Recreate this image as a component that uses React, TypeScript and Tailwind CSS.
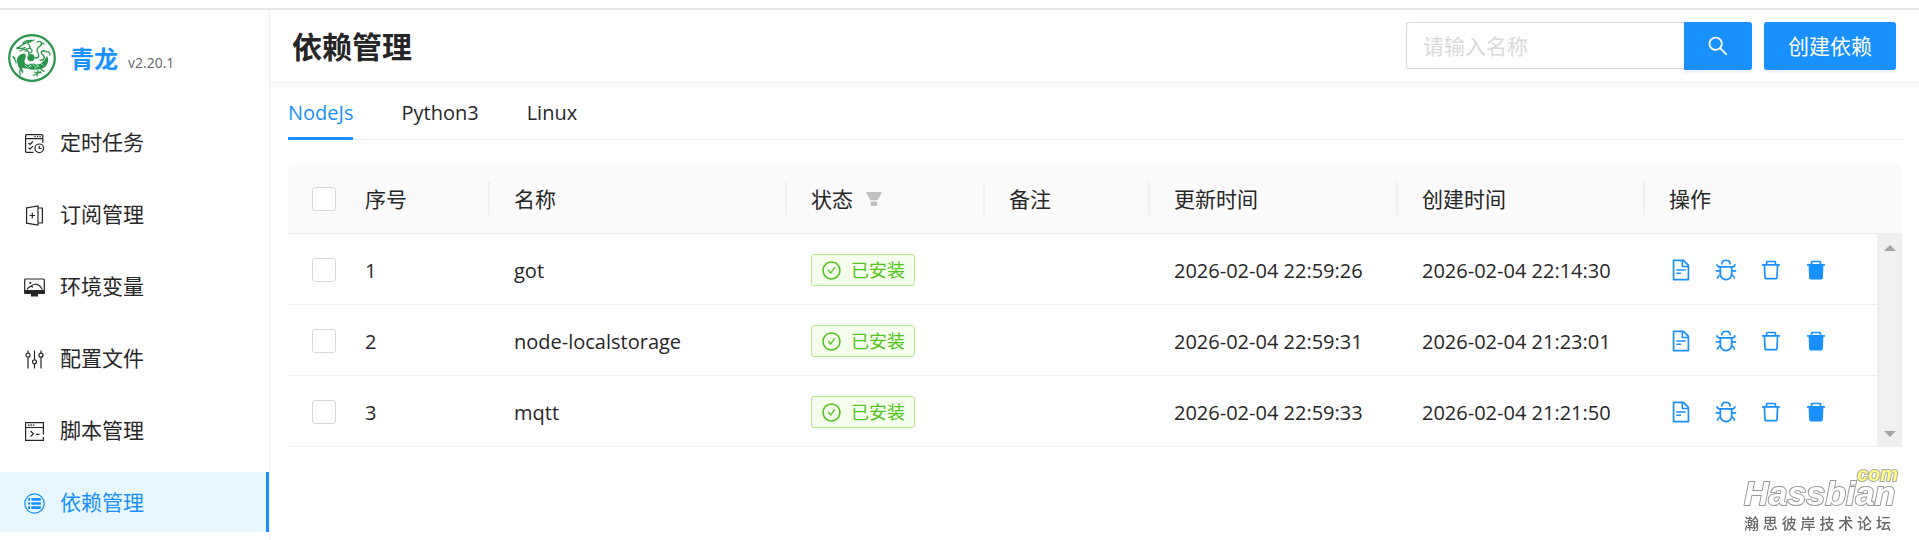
import { useState, type ReactNode } from "react";
import {
  AiFillDelete,
  AiFillFilter,
  AiOutlineBug,
  AiOutlineCheckCircle,
  AiOutlineDelete,
  AiOutlineFileText,
  AiOutlineSearch,
} from "react-icons/ai";

interface Dependence {
  id: number;
  name: string;
  remark: string;
  updatedAt: string;
  createdAt: string;
}

const rows: Dependence[] = [
  { id: 1, name: "got", remark: "", updatedAt: "2026-02-04 22:59:26", createdAt: "2026-02-04 22:14:30" },
  { id: 2, name: "node-localstorage", remark: "", updatedAt: "2026-02-04 22:59:31", createdAt: "2026-02-04 21:23:01" },
  { id: 3, name: "mqtt", remark: "", updatedAt: "2026-02-04 22:59:33", createdAt: "2026-02-04 21:21:50" },
];

const tabs = ["NodeJs", "Python3", "Linux"];

function MenuIcon({ children }: { children: ReactNode }) {
  return (
    <svg
      className="h-[21px] w-[21px] shrink-0"
      viewBox="0 0 21 21"
      fill="none"
      stroke="currentColor"
      strokeWidth="1.2"
      aria-hidden="true"
    >
      {children}
    </svg>
  );
}

const menu: { label: string; icon: ReactNode }[] = [
  {
    label: "定时任务",
    icon: (
      <MenuIcon>
        <path d="M9.5 19.4H2.6a1 1 0 0 1-1-1V2.6a1 1 0 0 1 1-1h15.2a1 1 0 0 1 1 1v7.2M1.6 5.6h17.2M10.5 3.6h1.2M13 3.6h1.2M15.5 3.6h1.2" />
        <path d="M4.4 10l1.6 1.5 3-3M4.4 14.6L6 16.1l3-3" />
        <circle cx="15.3" cy="15.3" r="4.3" />
        <path d="M15.2 12.8v2.7h2.2" />
      </MenuIcon>
    ),
  },
  {
    label: "订阅管理",
    icon: (
      <MenuIcon>
        <path d="M2.6 2.8L14 .9v19.2L2.6 18.2zM14 3h4.4v15H14M8.3 7.8v5.4M5.6 10.5H11" />
      </MenuIcon>
    ),
  },
  {
    label: "环境变量",
    icon: (
      <MenuIcon>
        <rect x=".7" y="2" width="19.6" height="14.4" rx="1" />
        <path d="M1 13.6h19v2.8H1zM7.5 16.4h6v2.6h-6z" fill="currentColor" />
        <path d="M3 12.5c1.6-3 4-4 6-2.2M6.5 9.6c3.5-4 9-2.8 11.7 2.9" />
        <circle cx="6.3" cy="5.8" r="1.1" fill="currentColor" stroke="none" />
      </MenuIcon>
    ),
  },
  {
    label: "配置文件",
    icon: (
      <MenuIcon>
        <path d="M4 1.5v2.7M4 8.2v11.3M10.5 1.5v9M10.5 15v4.5M17 1.5v2.7M17 8.2v11.3" />
        <circle cx="4" cy="6.2" r="2" />
        <circle cx="10.5" cy="12.8" r="2" />
        <circle cx="17" cy="6.2" r="2" />
      </MenuIcon>
    ),
  },
  {
    label: "脚本管理",
    icon: (
      <MenuIcon>
        <path d="M17 19.4H1.6V1.6h17.8v11.8M1.6 6.5h17.8M19.4 16v3.4H17M4 4.2h1.6M6.4 4.2H8M8.8 4.2h1.6M6.5 10l3 2.8-3 2.8M12 13.4h3.5" />
      </MenuIcon>
    ),
  },
  {
    label: "依赖管理",
    icon: (
      <MenuIcon>
        <circle cx="10.5" cy="10.5" r="9.7" />
        <path d="M4.2 6.4h1.9M4.2 10.5h1.9M4.2 14.6h1.9M7.4 6.4h9.4M7.4 10.5h9.4M7.4 14.6h9.4" strokeWidth="2.6" />
      </MenuIcon>
    ),
  },
];

function Logo() {
  return (
    <svg className="h-12 w-12 shrink-0" viewBox="0 0 48 48" fill="none" stroke="#27964a" strokeLinecap="round" aria-hidden="true">
      <circle cx="24" cy="24" r="22.8" strokeWidth="2.2" />
      <circle cx="23" cy="23.6" r="3.6" fill="#27964a" stroke="none" />
      {/* body */}
      <path d="M17 19.5c-7 .5-9 5-7.5 10 1.5 5.5 4 8 5.5 10 1-2-1-4-1-6 3 2 7 1 9-1-3-1-6-2-6.500-5 0-3 2.500-4 .5-8z" fill="#27964a" stroke="none" />
      <path d="M14 30c5 3 8-2 13 0 5 1 8-1 12-8 3 4 0 12-6 13-8 1-13 2-19-5z" fill="#27964a" stroke="none" />
      <path d="M17 31l2 2M20 29.500l3 3M24 29l3 3.500M28 30l3 2.500M32 28.500l3 2.500M20 33.500l3-2M27 34l3-2" stroke="#fff" strokeWidth=".6" />
      {/* head and horns */}
      <path d="M9 14c4-1 5-4 9-5 3 0 5-2 8-3M9 14.500c3-1 5 1 8-1M12 17c3-2 6-1 10-3M20 10c3 1 1 4 3 5s1 3-1 4M17 17c3-1 4 1 4 3M15 9l3-2 6-.5" strokeWidth="1.3" />
      {/* tail and clouds */}
      <path d="M29 8c4-2 6 2 3 4-3 2-4 4-2 7 2 4 0 5-3 5M37 17c-4-1-5 2-2 4 3 3 0 6-3 5M38 18c2-1 4 0 4 3M34 9l2 1" strokeWidth="1.3" />
      <path d="M5 22c0 3 4 4 3 7M5 23l2 1M12 36c-1 3 1 4 0 5M25 41c3 1 4-4 8-3M30 36l-1 6M33 35.500l3 2M26 38l7 1" strokeWidth="1.2" />
    </svg>
  );
}

function Sidebar() {
  return (
    <aside className="w-[270px] shrink-0 border-r border-[#f0f0f0]">
      <div className="flex h-[90px] items-center px-2 pt-[6px]">
        <Logo />
        <a href="#" className="ml-[14px] pt-[2px] text-[24px] font-bold text-[#1890ff]">青龙</a>
        <span className="ml-[10px] pt-2 text-[14px] font-medium text-[#666]">v2.20.1</span>
      </div>
      <nav className="flex flex-col gap-3 pt-3">
        {menu.map(({ label, icon }) => {
          const active = label === "依赖管理";
          return (
            <a
              key={label}
              href="#"
              aria-current={active ? "page" : undefined}
              className={`flex h-[60px] items-center gap-[15px] pt-[2px] pl-6 text-[21px] ${
                active ? "border-r-[3px] border-[#1890ff] bg-[#e6f7ff] text-[#1890ff]" : "text-[#262626]"
              }`}
            >
              {icon}
              {label}
            </a>
          );
        })}
      </nav>
    </aside>
  );
}

function Columns({ gutter = false }: { gutter?: boolean }) {
  return (
    <colgroup>
      <col className="w-[53px]" />
      <col className="w-[149px]" />
      <col />
      <col className="w-[198px]" />
      <col className="w-[165px]" />
      <col className="w-[248px]" />
      <col className="w-[247px]" />
      <col className="w-[232px]" />
      {gutter && <col className="w-[25px]" />}
    </colgroup>
  );
}

function Checkbox({ label, checked, onChange }: { label: string; checked: boolean; onChange: () => void }) {
  return (
    <input
      type="checkbox"
      aria-label={label}
      checked={checked}
      onChange={onChange}
      className="block h-6 w-6 appearance-none rounded-[3px] border border-[#d9d9d9] bg-white checked:border-[#1890ff] checked:bg-[#1890ff]"
    />
  );
}

function HeadCell({ children, last = false }: { children: ReactNode; last?: boolean }) {
  return (
    <th scope="col" className="p-0 text-left font-normal">
      <div className={`flex h-[33px] items-center pt-[2px] pl-6 ${last ? "" : "border-r-2 border-[#f0f0f0]"}`}>
        {children}
      </div>
    </th>
  );
}

function Action({ label, children }: { label: string; children: ReactNode }) {
  return (
    <button type="button" aria-label={label} className="text-[24px] text-[#1890ff] hover:text-[#40a9ff]">
      {children}
    </button>
  );
}

function DependenceTable() {
  const [selected, setSelected] = useState<number[]>([]);
  const allSelected = selected.length === rows.length;

  const toggle = (id: number) =>
    setSelected((prev) => (prev.includes(id) ? prev.filter((x) => x !== id) : [...prev, id]));

  return (
    <div className="mt-6 text-[#262626]">
      <table className="w-full table-fixed border-collapse rounded-t-[3px] bg-[#fafafa] text-[21px]">
        <Columns gutter />
        <thead>
          <tr className="h-[69px] border-b border-[#f0f0f0]">
            <th className="p-0 pt-[2px] pl-6">
              <Checkbox
                label="全选"
                checked={allSelected}
                onChange={() => setSelected(allSelected ? [] : rows.map((r) => r.id))}
              />
            </th>
            <HeadCell>序号</HeadCell>
            <HeadCell>名称</HeadCell>
            <HeadCell>
              状态
              <button type="button" aria-label="筛选" className="ml-[11px] text-[20px] text-[#bfbfbf]">
                <AiFillFilter />
              </button>
            </HeadCell>
            <HeadCell>备注</HeadCell>
            <HeadCell>更新时间</HeadCell>
            <HeadCell>创建时间</HeadCell>
            <HeadCell last>操作</HeadCell>
            <td />
          </tr>
        </thead>
      </table>

      <div className="flex">
        <table className="min-w-0 flex-1 table-fixed border-collapse text-[20px]">
          <Columns />
          <tbody>
            {rows.map((row) => (
              <tr key={row.id} className="h-[71px] border-b border-[#f0f0f0]">
                <td className="p-0 pt-[2px] pl-6">
                  <Checkbox label={row.name} checked={selected.includes(row.id)} onChange={() => toggle(row.id)} />
                </td>
                <td className="p-0 pt-1 pl-6">{row.id}</td>
                <td className="p-0 pt-1 pl-6">{row.name}</td>
                <td className="p-0 pt-[2px] pl-6">
                  <span className="inline-flex h-8 items-center gap-[9px] rounded-[3px] border border-[#b7eb8f] bg-[#f6ffed] px-[9px] align-middle text-[18px] text-[#52c41a]">
                    <AiOutlineCheckCircle className="text-[21px]" />
                    已安装
                  </span>
                </td>
                <td className="p-0 pt-1 pl-6">{row.remark}</td>
                <td className="p-0 pt-1 pl-6">{row.updatedAt}</td>
                <td className="p-0 pt-1 pl-6">{row.createdAt}</td>
                <td className="p-0 pt-[2px] pl-6">
                  <div className="flex gap-[21px]">
                    <Action label="日志"><AiOutlineFileText /></Action>
                    <Action label="重装"><AiOutlineBug /></Action>
                    <Action label="删除"><AiOutlineDelete /></Action>
                    <Action label="强制删除"><AiFillDelete /></Action>
                  </div>
                </td>
              </tr>
            ))}
          </tbody>
        </table>
        <div className="flex w-[25px] flex-col items-center justify-between bg-[#f0f0f0] pt-[11px] pb-[10px]" aria-hidden="true">
          <span className="border-x-[6px] border-b-[6px] border-x-transparent border-b-[#a3a3a3]" />
          <span className="border-x-[6px] border-t-[6px] border-x-transparent border-t-[#a3a3a3]" />
        </div>
      </div>
    </div>
  );
}

function Watermark() {
  return (
    <div className="pointer-events-none fixed right-[21px] bottom-[6px] w-[154px] text-[#666]">
      <div className="font-['Liberation_Sans',sans-serif] text-[34px] leading-[38px] font-bold text-white italic [paint-order:stroke_fill] [-webkit-text-stroke:2px_#999]">
        Hassbian
      </div>
      <div className="absolute -top-[11px] right-0 font-['Liberation_Sans',sans-serif] text-[20px] leading-[22px] font-bold text-[#fffb80] italic [paint-order:stroke_fill] [-webkit-text-stroke:2px_#aaa]">
        com
      </div>
      <div className="flex w-[147px] justify-between text-[15px] leading-[22px] font-medium">
        {[..."瀚思彼岸技术论坛"].map((ch) => (
          <span key={ch}>{ch}</span>
        ))}
      </div>
    </div>
  );
}

export default function App() {
  const [tab, setTab] = useState("NodeJs");

  return (
    <div className="flex min-h-screen flex-col bg-white pt-2 font-['Open_Sans','Noto_Sans_CJK_SC',sans-serif] text-[#262626]">
      <div className="flex flex-1 border-t-2 border-[#e3e7ea]">
        <Sidebar />
        <main className="min-w-0 flex-1">
          <header className="flex h-[73px] items-center justify-between border-b border-[#f0f0f0] pr-[23px] pl-[22px] shadow-[0_2px_6px_rgba(0,0,0,0.04)]">
            <h1 className="pt-[2px] text-[30px] leading-[40px] font-bold">依赖管理</h1>
            <div className="flex gap-3">
              <form className="flex" onSubmit={(e) => e.preventDefault()}>
                <input
                  type="text"
                  aria-label="名称"
                  placeholder="请输入名称"
                  className="h-[47px] w-[278px] rounded-l-[3px] border border-r-0 border-[#d9d9d9] px-4 text-[21px] outline-none placeholder:text-[#d9d9d9] focus:border-[#40a9ff]"
                />
                <button
                  type="submit"
                  aria-label="搜索"
                  className="flex h-12 w-[68px] items-center justify-center rounded-r-[3px] bg-[#1890ff] text-[24px] text-white shadow-[0_3px_0_rgba(0,0,0,0.04)]"
                >
                  <AiOutlineSearch />
                </button>
              </form>
              <button
                type="button"
                className="h-12 rounded-[3px] bg-[#1890ff] px-6 pt-[2px] text-[21px] text-white shadow-[0_3px_0_rgba(0,0,0,0.04)]"
              >
                创建依赖
              </button>
            </div>
          </header>

          <section className="pr-[17px] pl-[18px]">
            <div role="tablist" className="flex h-[57px] gap-12 border-b border-[#f0f0f0] text-[20px]">
              {tabs.map((name) => (
                <button
                  key={name}
                  type="button"
                  role="tab"
                  aria-selected={tab === name}
                  onClick={() => setTab(name)}
                  className={`-mb-px border-b-[3px] pt-[6px] ${
                    tab === name ? "border-[#1890ff] text-[#1890ff]" : "border-transparent"
                  }`}
                >
                  {name}
                </button>
              ))}
            </div>
            <DependenceTable />
          </section>
        </main>
      </div>
      <Watermark />
    </div>
  );
}
